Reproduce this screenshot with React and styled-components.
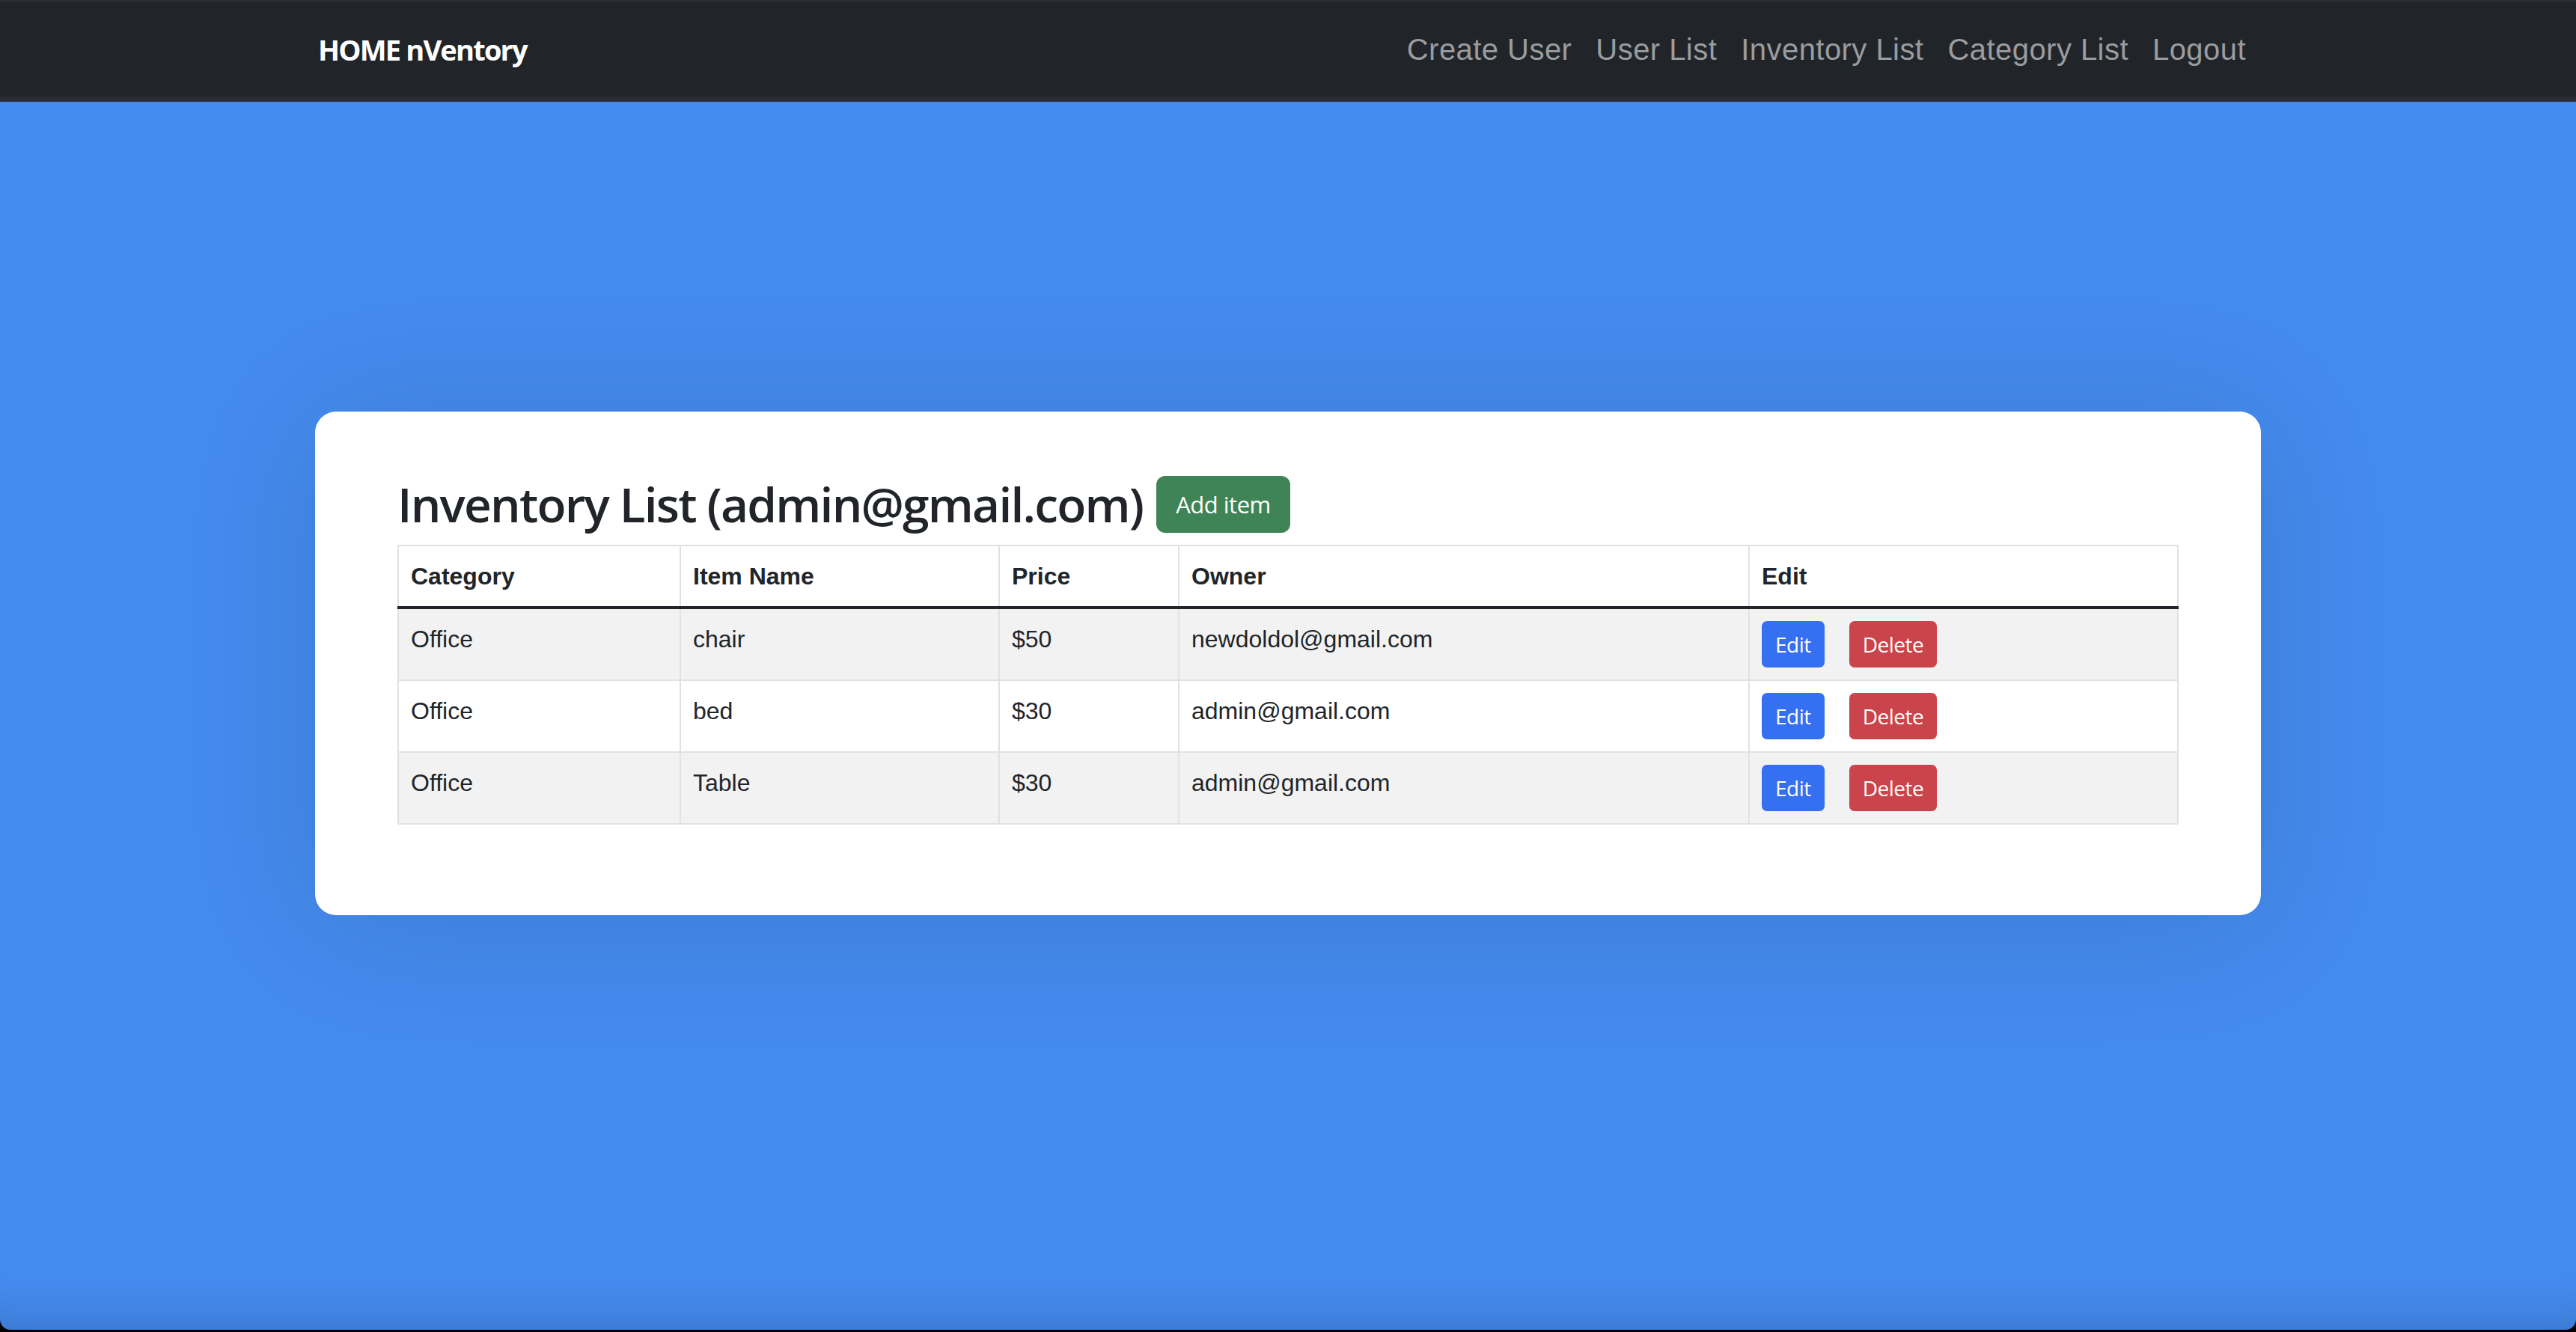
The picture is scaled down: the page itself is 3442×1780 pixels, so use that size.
import React from "react";
import styled, { createGlobalStyle } from "styled-components";

const GlobalStyle = createGlobalStyle`
  html, body { margin: 0; padding: 0; background: #000; }
  * { box-sizing: border-box; }
`;

const HUMAN = `"Open Sans", "Noto Sans", sans-serif`;
const HELV = `"Liberation Sans", Arial, sans-serif`;

const Page = styled.div`
  height: 1777px;
  background: #458cf0;
  border-radius: 0 0 14px 14px;
  overflow: hidden;
  display: flex;
  flex-direction: column;
  box-shadow: inset 0 -70px 60px -50px rgba(0, 0, 0, 0.14);
`;

const Navbar = styled.nav`
  flex: 0 0 auto;
  height: 136px;
  background: #212529;
  border-top: 3px solid #2a2d33;
  border-bottom: 7px solid #2a2d33;
  display: flex;
  align-items: center;
`;

const NavContainer = styled.div`
  width: 2640px;
  margin: 0 auto;
  padding: 0 24px;
  display: flex;
  align-items: center;
  justify-content: space-between;
`;

const Brand = styled.a`
  font-family: ${HUMAN};
  font-weight: 700;
  font-size: 38px;
  letter-spacing: -1.8px;
  color: #fff;
  text-decoration: none;
  line-height: 60px;
`;

const NavList = styled.div`
  display: flex;
  align-items: center;
`;

const NavLink = styled.a`
  font-family: ${HELV};
  font-size: 40px;
  letter-spacing: 0.45px;
  line-height: 60px;
  color: #9a9c9f;
  padding: 0 16px;
  text-decoration: none;
`;

const Main = styled.main`
  flex: 1 1 auto;
  padding-top: 414px;
`;

const Card = styled.section`
  width: 2600px;
  margin: 0 auto;
  background: #fff;
  border-radius: 28px;
  padding: 85px 110px 121px;
  box-shadow: 0 10px 200px 10px rgba(0, 0, 0, 0.13);
`;

const TitleRow = styled.div`
  display: flex;
  align-items: center;
  gap: 18px;
  margin-bottom: 16px;
`;

const Title = styled.h2`
  margin: 0;
  font-family: ${HUMAN};
  font-weight: 600;
  font-size: 64px;
  line-height: 77px;
  letter-spacing: -1.8px;
  color: #212529;
`;

const Button = styled.button`
  font-family: ${HUMAN};
  color: #fff;
  border: 2px solid transparent;
  cursor: pointer;
  background: ${(p) =>
    p.$variant === "success" ? "#3f8456" : p.$variant === "danger" ? "#ca444b" : "#356ff2"};
  font-size: ${(p) => (p.$small ? "28px" : "31px")};
  line-height: ${(p) => (p.$small ? "42px" : "48px")};
  padding: ${(p) => (p.$small ? "8px 16px" : "12px 24px")};
  border-radius: ${(p) => (p.$small ? "7px" : "12px")};
  margin-left: ${(p) => (p.$spaced ? "33px" : "0")};
  letter-spacing: -0.5px;
`;

const Table = styled.table`
  width: 100%;
  table-layout: fixed;
  border-collapse: collapse;
  color: #212529;
  font-family: ${HELV};
  font-size: 32px;
  line-height: 48px;
  vertical-align: top;
`;

const Th = styled.th`
  text-align: left;
  font-weight: 700;
  padding: 16px 16px;
  border: 2px solid #dee2e6;
  border-bottom: 4px solid #212529;
  width: ${(p) => p.$w || "auto"};
`;

const Row = styled.tr`
  background: ${(p) => (p.$striped ? "#f2f2f2" : "#fff")};
`;

const Td = styled.td`
  padding: 16px 16px;
  border: 2px solid #dee2e6;
  vertical-align: top;
`;

const items = [
  { category: "Office", name: "chair", price: "$50", owner: "newdoldol@gmail.com" },
  { category: "Office", name: "bed", price: "$30", owner: "admin@gmail.com" },
  { category: "Office", name: "Table", price: "$30", owner: "admin@gmail.com" },
];

export default function App() {
  return (
    <>
      <GlobalStyle />
      <Page>
        <Navbar>
          <NavContainer>
            <Brand href="#">HOME nVentory</Brand>
            <NavList>
              <NavLink href="#">Create User</NavLink>
              <NavLink href="#">User List</NavLink>
              <NavLink href="#">Inventory List</NavLink>
              <NavLink href="#">Category List</NavLink>
              <NavLink href="#">Logout</NavLink>
            </NavList>
          </NavContainer>
        </Navbar>
        <Main>
          <Card>
            <TitleRow>
              <Title>Inventory List (admin@gmail.com)</Title>
              <Button $variant="success">Add item</Button>
            </TitleRow>
            <Table>
              <thead>
                <tr>
                  <Th $w="377px">Category</Th>
                  <Th $w="426px">Item Name</Th>
                  <Th $w="240px">Price</Th>
                  <Th $w="762px">Owner</Th>
                  <Th>Edit</Th>
                </tr>
              </thead>
              <tbody>
                {items.map((it, i) => (
                  <Row key={i} $striped={i % 2 === 0}>
                    <Td>{it.category}</Td>
                    <Td>{it.name}</Td>
                    <Td>{it.price}</Td>
                    <Td>{it.owner}</Td>
                    <Td>
                      <Button $small $variant="primary">Edit</Button>
                      <Button $small $spaced $variant="danger">Delete</Button>
                    </Td>
                  </Row>
                ))}
              </tbody>
            </Table>
          </Card>
        </Main>
      </Page>
    </>
  );
}
